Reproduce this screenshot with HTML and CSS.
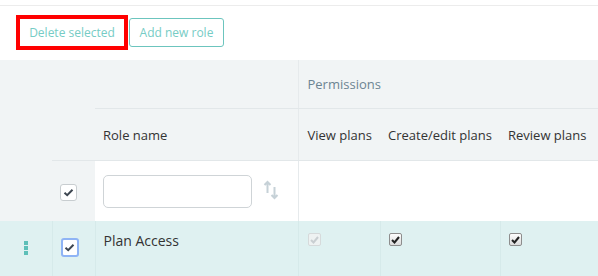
FILE: index.html
```html
<!DOCTYPE html>
<html lang="en">
<head>
    <meta charset="UTF-8">
    <title>Roles</title>
    <link rel="stylesheet" href="styles.css">
</head>
<body>
    <div class="top-line"></div>

    <div class="toolbar">
        <button class="btn btn-delete">Delete selected</button>
        <button class="btn btn-add">Add new role</button>
    </div>

    <table class="roles">
        <colgroup>
            <col class="c-drag">
            <col class="c-check">
            <col class="c-name">
            <col class="c-view">
            <col class="c-edit">
            <col class="c-review">
        </colgroup>
        <thead>
            <tr class="head-top">
                <th rowspan="2" class="drag"></th>
                <th rowspan="2" class="sel"></th>
                <th class="name"></th>
                <th colspan="3" class="group">Permissions</th>
            </tr>
            <tr class="head-cols">
                <th class="name">Role name</th>
                <th class="perm first">View plans</th>
                <th class="perm">Create/edit plans</th>
                <th class="perm">Review plans</th>
            </tr>
        </thead>
        <tbody>
            <tr class="filter-row">
                <td class="drag"></td>
                <td class="sel">
                    <span class="box">
                        <svg width="11" height="9" viewBox="0 0 11 9"><path d="M1.5 4.8 L4.2 7.2 L9.5 1.8" fill="none" stroke="#3d4650" stroke-width="2"/></svg>
                    </span>
                </td>
                <td class="name">
                    <div class="filter">
                        <input type="text" class="filter-input">
                        <svg class="sort" width="16" height="20" viewBox="0 0 16 20">
                            <path d="M4.5 13 V2 M1.5 5 L4.5 2 L7.5 5" fill="none" stroke="#c6d1d7" stroke-width="2"/>
                            <path d="M11.5 7 V18 M8.5 15 L11.5 18 L14.5 15" fill="none" stroke="#c6d1d7" stroke-width="2"/>
                        </svg>
                    </div>
                </td>
                <td class="perm first"></td>
                <td class="perm"></td>
                <td class="perm"></td>
            </tr>
            <tr class="data-row">
                <td class="drag">
                    <span class="handle"><i></i><i></i><i></i></span>
                </td>
                <td class="sel">
                    <span class="box focus">
                        <svg width="11" height="9" viewBox="0 0 11 9"><path d="M1.5 4.8 L4.2 7.2 L9.5 1.8" fill="none" stroke="#3d4650" stroke-width="2"/></svg>
                    </span>
                </td>
                <td class="name">Plan Access</td>
                <td class="perm first">
                    <span class="native disabled">
                        <svg width="9" height="8" viewBox="0 0 9 8"><path d="M1 4 L3.5 6.5 L8 1" fill="none" stroke="#c9cfd2" stroke-width="2"/></svg>
                    </span>
                </td>
                <td class="perm">
                    <span class="native">
                        <svg width="9" height="8" viewBox="0 0 9 8"><path d="M1 4 L3.5 6.5 L8 1" fill="none" stroke="#222" stroke-width="2"/></svg>
                    </span>
                </td>
                <td class="perm">
                    <span class="native">
                        <svg width="9" height="8" viewBox="0 0 9 8"><path d="M1 4 L3.5 6.5 L8 1" fill="none" stroke="#222" stroke-width="2"/></svg>
                    </span>
                </td>
            </tr>
        </tbody>
    </table>
</body>
</html>
```

FILE: styles.css
```css
* {
    margin: 0;
    padding: 0;
    box-sizing: border-box;
}

body {
    font-family: "Open Sans", Arial, sans-serif;
    font-size: 13px;
    color: #333;
    background-color: #fff;
    overflow: hidden;
}

.top-line {
    height: 6px;
    border-bottom: 1px solid #ececec;
}

/* Toolbar */
.toolbar {
    display: flex;
    align-items: flex-start;
    gap: 1px;
    padding: 9px 0 0 16px;
    height: 54px;
}

.btn {
    font-family: "Open Sans", Arial, sans-serif;
    font-size: 12px;
    color: #76ccc5;
    background: #fff;
    cursor: pointer;
}

.btn-delete {
    width: 112px;
    height: 35px;
    border: 4px solid #ff0000;
}

.btn-add {
    width: 95px;
    height: 29px;
    margin-top: 3px;
    border: 1px solid #6cc5be;
    border-radius: 3px;
}

/* Table */
.roles {
    width: 620px;
    border-collapse: collapse;
    table-layout: fixed;
}

.c-drag { width: 52px; }
.c-check { width: 43px; }
.c-name { width: 203px; }
.c-view { width: 82px; }
.c-edit { width: 120px; }
.c-review { width: 120px; }

.roles th {
    background-color: #f1f4f5;
    font-weight: normal;
    text-align: left;
    color: #333;
}

.head-top th {
    height: 48px;
}

.head-top th.name,
.head-top th.sel {
    border-bottom: 1px solid #e2e7e9;
}

.head-top .group {
    color: #6c8492;
    padding-left: 9px;
    border-left: 1px solid #e6eaec;
    border-bottom: 1px solid #e2e7e9;
}

.head-cols th {
    height: 52px;
    padding-top: 2px;
    padding-left: 8px;
    border-bottom: 1px solid #e2e7e9;
}

.head-cols th.first {
    padding-left: 9px;
    border-left: 1px solid #e6eaec;
}

/* Filter row */
.filter-row td {
    height: 61px;
    background-color: #fff;
}

.filter-row td.drag,
.filter-row td.sel {
    background-color: #f1f4f5;
}

.filter-row td.sel {
    padding-left: 8px;
    padding-top: 4px;
}

.filter-row td.first {
    border-left: 1px solid #e6eaec;
}

.filter {
    display: flex;
    align-items: center;
    padding-left: 8px;
    gap: 11px;
}

.filter-input {
    width: 149px;
    height: 33px;
    border: 1px solid #cfd4d7;
    border-radius: 5px;
    margin-top: 1px;
}

.sort {
    margin-top: -1px;
}

.box {
    display: flex;
    align-items: center;
    justify-content: center;
    width: 17px;
    height: 17px;
    background: #fff;
    border: 1px solid #c8cdd0;
    border-radius: 3px;
}

.box.focus {
    width: 18px;
    height: 19px;
    border: 2px solid #8fb4f5;
}

/* Data row */
.data-row td {
    height: 55px;
    background-color: #dff1f1;
    border-left: 1px solid #d6eaea;
    vertical-align: top;
}

.data-row td.drag {
    border-left: none;
}

.data-row td.sel {
    padding: 17px 0 0 8px;
}

.data-row td.name {
    padding: 10px 0 0 8px;
    font-size: 14px;
}

.data-row td.perm {
    padding: 12px 0 0 8px;
}

.data-row td.first {
    padding-left: 9px;
}

.handle {
    display: flex;
    flex-direction: column;
    gap: 1px;
    margin: 20px 0 0 24px;
}

.handle i {
    width: 4px;
    height: 4px;
    background-color: #5dbfb8;
}

.native {
    display: flex;
    align-items: center;
    justify-content: center;
    width: 13px;
    height: 13px;
    border: 1px solid #8d8d8d;
    border-radius: 2px;
    background: linear-gradient(#fdfdfd, #dcdcdc);
}

.native.disabled {
    border-color: #d6dadb;
    background: #eef2f2;
}
```
